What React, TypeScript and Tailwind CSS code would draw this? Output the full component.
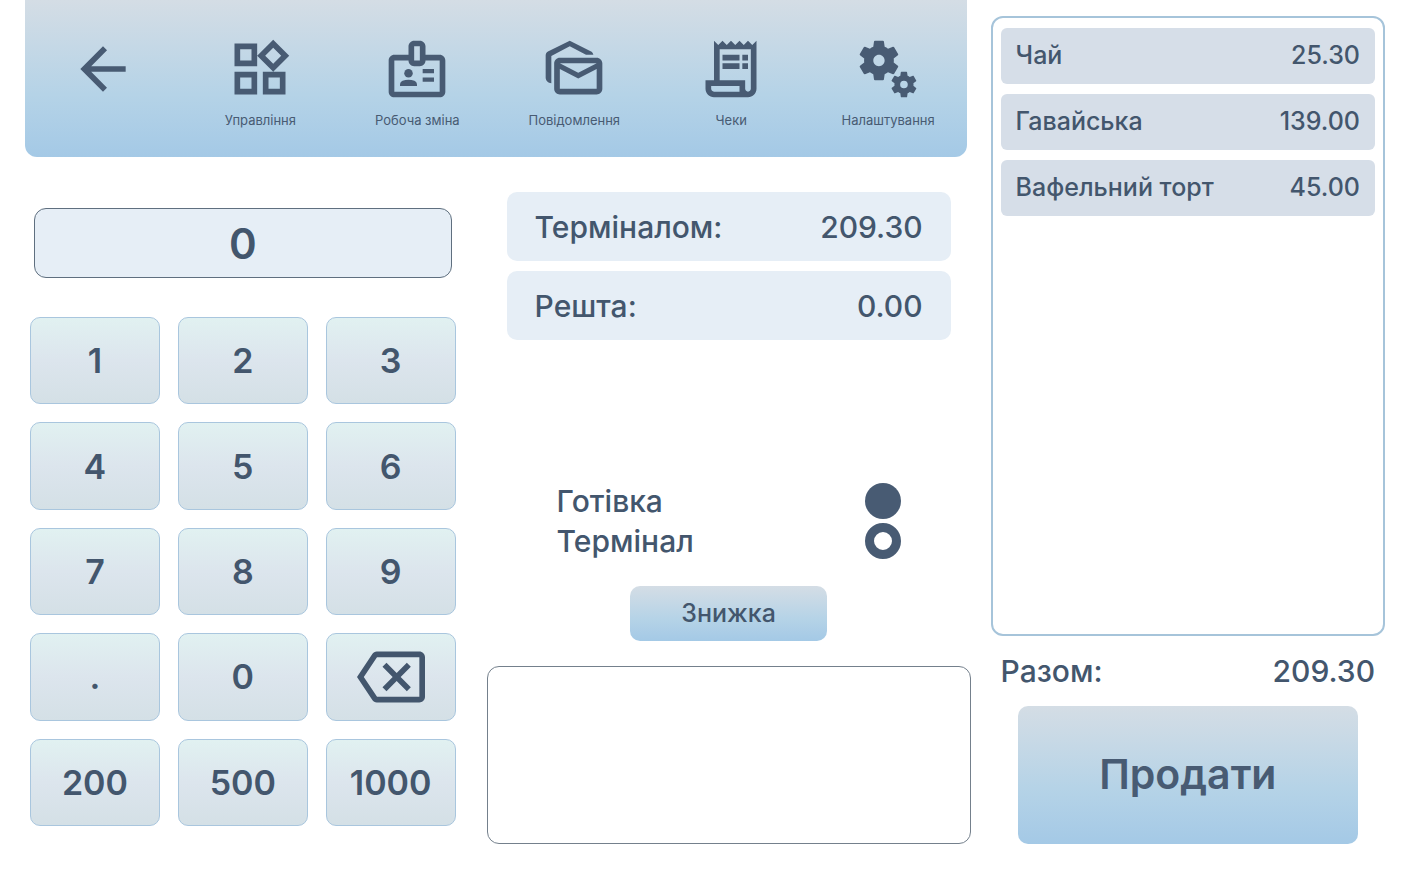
import { useState } from "react";
import type { ReactNode } from "react";
import {
  MdArrowBack,
  MdMiscellaneousServices,
  MdOutlineBackspace,
  MdOutlineBadge,
  MdOutlineMarkAsUnread,
  MdOutlineReceiptLong,
  MdOutlineWidgets,
} from "react-icons/md";

const navItems = [
  { label: "Управління", icon: <MdOutlineWidgets size={68} /> },
  { label: "Робоча зміна", icon: <MdOutlineBadge size={68} /> },
  { label: "Повідомлення", icon: <MdOutlineMarkAsUnread size={68} /> },
  { label: "Чеки", icon: <MdOutlineReceiptLong size={68} /> },
  { label: "Налаштування", icon: <MdMiscellaneousServices size={68} /> },
];

const order = [
  { name: "Чай", price: 25.3 },
  { name: "Гавайська", price: 139 },
  { name: "Вафельний торт", price: 45 },
];

const digits = ["1", "2", "3", "4", "5", "6", "7", "8", "9", ".", "0"];
const banknotes = ["200", "500", "1000"];

function Header() {
  return (
    <header className="mr-1 rounded-b-xl bg-linear-to-b from-[#d4dde5] via-[#b5d3e7] via-60% to-[#a4c9e6] text-[#485b73]">
      <nav className="grid h-[157px] grid-cols-6 pt-[35px]">
        <button type="button" aria-label="Назад" className="flex flex-col items-center">
          <MdArrowBack size={68} />
        </button>
        {navItems.map((item) => (
          <button key={item.label} type="button" className="flex flex-col items-center gap-[9px]">
            {item.icon}
            <span className="text-[13px] leading-4">{item.label}</span>
          </button>
        ))}
      </nav>
    </header>
  );
}

interface KeyProps {
  children: ReactNode;
  label?: string;
  onClick: () => void;
}

function Key({ children, label, onClick }: KeyProps) {
  return (
    <button
      type="button"
      aria-label={label}
      onClick={onClick}
      className="flex items-center justify-center rounded-[10px] border border-[#a9c6de] bg-linear-to-b from-[#e1f1f1] via-[#dce5ed] to-[#d4e0e6] text-[34px] font-semibold"
    >
      {children}
    </button>
  );
}

function Keypad() {
  const [amount, setAmount] = useState("0");

  const press = (value: string) =>
    setAmount((current) => (current === "0" && value !== "." ? value : current + value));

  return (
    <section className="flex min-w-0 flex-col px-[5px] pt-[51px] pb-[18px]">
      <input
        aria-label="Сума"
        value={amount}
        onChange={(e) => setAmount(e.target.value)}
        className="mx-1 h-[70px] min-w-0 rounded-xl border border-[#5f6f7f] bg-[#e6eef6] text-center text-[42px] font-semibold outline-none"
      />
      <div className="mt-[39px] grid flex-1 auto-rows-fr grid-cols-3 gap-[18px]">
        {digits.map((digit) => (
          <Key key={digit} onClick={() => press(digit)}>
            {digit}
          </Key>
        ))}
        <Key label="Стерти" onClick={() => setAmount((current) => current.slice(0, -1) || "0")}>
          <MdOutlineBackspace size={68} />
        </Key>
        {banknotes.map((note) => (
          <Key key={note} onClick={() => setAmount(note)}>
            {note}
          </Key>
        ))}
      </div>
    </section>
  );
}

function SummaryRow({ label, value }: { label: string; value: string }) {
  return (
    <div className="flex h-[69px] items-center justify-between rounded-[10px] bg-[#e6eef6] px-7 text-3xl font-medium">
      <span>{label}</span>
      <span>{value}</span>
    </div>
  );
}

interface PaymentOptionProps {
  label: string;
  checked: boolean;
  onChange: () => void;
}

function PaymentOption({ label, checked, onChange }: PaymentOptionProps) {
  return (
    <label className="flex h-10 items-center justify-between text-3xl font-medium">
      {label}
      <input
        type="radio"
        name="payment"
        checked={checked}
        onChange={onChange}
        className="size-9 appearance-none rounded-full bg-[#485b73] checked:border-9 checked:border-[#485b73] checked:bg-white"
      />
    </label>
  );
}

function Payment({ total }: { total: string }) {
  const [method, setMethod] = useState("terminal");

  return (
    <section className="flex min-w-0 flex-col pt-[35px]">
      <div className="mx-5 flex flex-col gap-[10px]">
        <SummaryRow label="Терміналом:" value={total} />
        <SummaryRow label="Решта:" value="0.00" />
      </div>
      <div className="mx-[70px] mt-auto pt-10">
        <PaymentOption label="Готівка" checked={method === "cash"} onChange={() => setMethod("cash")} />
        <PaymentOption label="Термінал" checked={method === "terminal"} onChange={() => setMethod("terminal")} />
      </div>
      <button
        type="button"
        className="mt-[25px] h-[55px] w-[197px] self-center rounded-[10px] bg-linear-to-b from-[#d4dde5] via-[#b5d3e7] via-60% to-[#a4c9e6] text-[25px] font-medium"
      >
        Знижка
      </button>
      <textarea
        aria-label="Коментар"
        className="mt-[25px] h-[178px] resize-none rounded-xl border border-[#74808c] p-3 text-xl outline-none"
      />
    </section>
  );
}

function Order({ total }: { total: string }) {
  return (
    <aside className="flex w-[29%] shrink-0 flex-col pt-4">
      <ul className="flex flex-1 flex-col gap-[10px] rounded-xl border-2 border-[#a6c4da] px-2 py-[10px]">
        {order.map((item) => (
          <li
            key={item.name}
            className="flex h-14 items-center justify-between rounded-md bg-[#d6dee8] px-[15px] text-[25px] font-medium"
          >
            <span>{item.name}</span>
            <span>{item.price.toFixed(2)}</span>
          </li>
        ))}
      </ul>
      <div className="flex h-[70px] items-center justify-between px-[10px] text-3xl font-medium">
        <span>Разом:</span>
        <span>{total}</span>
      </div>
      <button
        type="button"
        className="mx-[27px] h-[138px] rounded-[10px] bg-linear-to-b from-[#d4dde5] via-[#b5d3e7] via-60% to-[#a4c9e6] text-[41px] font-semibold text-[#485b73]"
      >
        Продати
      </button>
    </aside>
  );
}

export default function App() {
  const total = order.reduce((sum, item) => sum + item.price, 0).toFixed(2);

  return (
    <div className="flex min-h-screen gap-5 bg-white pr-[21px] pb-8 pl-[25px] font-[Inter,sans-serif] text-[#43566d]">
      <main className="flex min-w-0 flex-1 flex-col">
        <Header />
        <div className="grid flex-1 grid-cols-[9fr_10fr] gap-[26px]">
          <Keypad />
          <Payment total={total} />
        </div>
      </main>
      <Order total={total} />
    </div>
  );
}
